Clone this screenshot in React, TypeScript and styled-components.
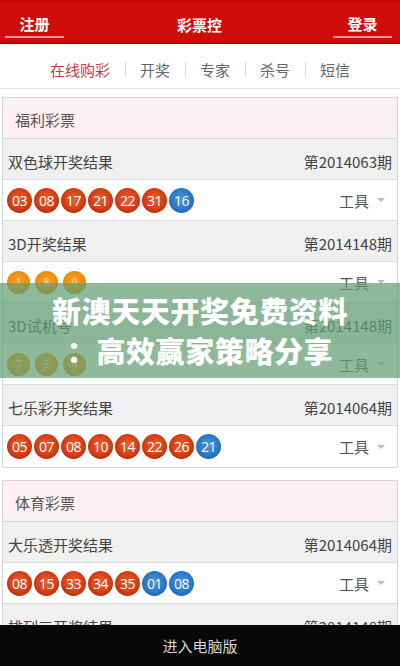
import React from "react";
import styled, { createGlobalStyle } from "styled-components";

const Global = createGlobalStyle`
  html, body { margin: 0; padding: 0; background: #ffffff; }
  body { font-family: "Noto Sans CJK SC", "Noto Sans", sans-serif; color: #333; }
  * { box-sizing: border-box; }
`;

const Page = styled.div`
  position: relative;
  width: 400px;
  min-height: 666px;
  background: #fff;
  padding-bottom: 60px;
`;

const TopBar = styled.header`
  height: 44px;
  display: flex;
  align-items: center;
  justify-content: space-between;
  padding: 0 8px 0 5px;
  background: linear-gradient(#c30606 0px, #d20c0c 3px, #cf0b0b 40px, #b80606 44px);
`;

const SideLink = styled.span`
  width: 59px;
  align-self: flex-end;
  margin-bottom: 6px;
  line-height: 22px;
  padding-bottom: 1px;
  text-align: center;
  color: #fff;
  font-size: 15px;
  font-weight: 700;
  border-bottom: 2px solid #f19a92;
`;

const Title = styled.span`
  color: #fff;
  font-size: 15px;
  font-weight: 700;
  margin-top: 4px;
  margin-left: 2px;
`;

const Nav = styled.nav`
  height: 45px;
  display: flex;
  align-items: center;
  justify-content: center;
  border-bottom: 1px solid #e6e6e6;
  padding-top: 6px;
`;

const NavItem = styled.span<{ $active?: boolean }>`
  font-size: 15px;
  color: ${(p) => (p.$active ? "#c23a46" : "#666")};
`;

const Sep = styled.span`
  width: 1px;
  height: 15px;
  background: #d6d6d6;
  margin: 0 14px 0 15px;
`;

const Content = styled.main`
  display: flex;
  flex-direction: column;
  gap: 12px;
  padding: 8px 2px 0;
`;

const Card = styled.section`
  border: 1px solid #d4d4d4;
  background: #fff;
`;

const CardHead = styled.div`
  height: 41px;
  display: flex;
  align-items: center;
  padding: 3px 12px 0;
  background: #fcf0f2;
  border-bottom: 1px solid #d9d2d3;
  font-size: 15px;
  color: #555;
`;

const TitleRow = styled.div`
  height: 41px;
  display: flex;
  align-items: center;
  justify-content: space-between;
  padding: 4px 5px 0 5px;
  background: #f0f0f0;
  border-bottom: 1px solid #dcdcdc;
  font-size: 15px;
  color: #444;
`;

const BallRow = styled.div`
  height: 41px;
  display: flex;
  align-items: center;
  padding: 0 12px 0 4px;
  background: #fff;
  border-bottom: 1px solid #dcdcdc;
  &:last-child { border-bottom: none; }
`;

const Balls = styled.div<{ $gap: number }>`
  display: flex;
  gap: ${(p) => p.$gap}px;
  flex: 1;
`;

const Ball = styled.span<{ $kind: "red" | "blue" | "orange" }>`
  width: ${(p) => (p.$kind === "orange" ? 23 : 25)}px;
  height: ${(p) => (p.$kind === "orange" ? 23 : 25)}px;
  border-radius: 50%;
  display: flex;
  align-items: center;
  justify-content: center;
  font-family: "Noto Sans", "DejaVu Sans", sans-serif;
  font-size: ${(p) => (p.$kind === "orange" ? 10 : 14)}px;
  letter-spacing: -0.4px;
  color: ${(p) => (p.$kind === "orange" ? "#fde7c4" : "#fff")};
  text-shadow: 0 0 1px rgba(0, 0, 0, 0.35);
  background: ${(p) =>
    p.$kind === "red"
      ? "radial-gradient(circle at 50% 45%, #f0602e 0%, #dc4216 48%, #b32d0c 78%, #d9652e 92%, #f2a56c 100%)"
      : p.$kind === "blue"
      ? "radial-gradient(circle at 50% 45%, #4d9be0 0%, #2a77c6 55%, #1c5fae 85%, #4f8fd0 100%)"
      : "radial-gradient(circle at 50% 45%, #f7a524 0%, #ee8c08 60%, #d97400 88%, #f3b560 100%)"};
`;

const Tool = styled.span`
  display: flex;
  align-items: center;
  font-size: 15px;
  color: #555;
  &::after {
    content: "";
    margin-left: 8px;
    border-left: 4px solid transparent;
    border-right: 4px solid transparent;
    border-top: 4px solid #bcbcbc;
  }
`;

const Footer = styled.footer`
  position: fixed;
  left: 0;
  right: 0;
  bottom: 0;
  height: 41px;
  display: flex;
  align-items: center;
  justify-content: center;
  background: #080808;
  color: #d6d6d6;
  font-size: 15px;
`;

const Promo = styled.div`
  position: absolute;
  left: 0;
  right: 0;
  top: 283px;
  height: 95px;
  display: flex;
  flex-direction: column;
  align-items: center;
  justify-content: center;
  padding-bottom: 2px;
  background: rgba(98, 160, 116, 0.72);
`;

const PromoLine = styled.div`
  line-height: 40px;
  font-size: 29px;
  font-weight: 900;
  color: #fff;
  letter-spacing: 0.6px;
  white-space: nowrap;
`;

type Draw = {
  name: string;
  issue: string;
  reds: string[];
  blues: string[];
  kind?: "orange";
};

const welfare: Draw[] = [
  { name: "双色球开奖结果", issue: "第2014063期", reds: ["03", "08", "17", "21", "22", "31"], blues: ["16"] },
  { name: "3D开奖结果", issue: "第2014148期", reds: ["1", "8", "0"], blues: [], kind: "orange" },
  { name: "3D试机号", issue: "第2014148期", reds: ["7", "5", "4"], blues: [], kind: "orange" },
  { name: "七乐彩开奖结果", issue: "第2014064期", reds: ["05", "07", "08", "10", "14", "22", "26"], blues: ["21"] },
];

const sports: Draw[] = [
  { name: "大乐透开奖结果", issue: "第2014064期", reds: ["08", "15", "33", "34", "35"], blues: ["01", "08"] },
  { name: "排列三开奖结果", issue: "第2014148期", reds: ["3", "6", "2"], blues: [], kind: "orange" },
];

function DrawBlock({ d }: { d: Draw }) {
  const orange = d.kind === "orange";
  return (
    <>
      <TitleRow>
        <span>{d.name}</span>
        <span>{d.issue}</span>
      </TitleRow>
      <BallRow>
        <Balls $gap={orange ? 5 : 2}>
          {d.reds.map((n, i) => (
            <Ball key={"r" + i} $kind={orange ? "orange" : "red"}>{n}</Ball>
          ))}
          {d.blues.map((n, i) => (
            <Ball key={"b" + i} $kind="blue">{n}</Ball>
          ))}
        </Balls>
        <Tool>工具</Tool>
      </BallRow>
    </>
  );
}

export default function App() {
  return (
    <Page>
      <Global />
      <TopBar>
        <SideLink>注册</SideLink>
        <Title>彩票控</Title>
        <SideLink>登录</SideLink>
      </TopBar>
      <Nav>
        <NavItem $active>在线购彩</NavItem>
        <Sep />
        <NavItem>开奖</NavItem>
        <Sep />
        <NavItem>专家</NavItem>
        <Sep />
        <NavItem>杀号</NavItem>
        <Sep />
        <NavItem>短信</NavItem>
      </Nav>
      <Content>
        <Card>
          <CardHead>福利彩票</CardHead>
          {welfare.map((d) => (
            <DrawBlock key={d.name} d={d} />
          ))}
        </Card>
        <Card>
          <CardHead>体育彩票</CardHead>
          {sports.map((d) => (
            <DrawBlock key={d.name} d={d} />
          ))}
        </Card>
      </Content>
      <Promo>
        <PromoLine>新澳天天开奖免费资料</PromoLine>
        <PromoLine>：高效赢家策略分享</PromoLine>
      </Promo>
      <Footer>进入电脑版</Footer>
    </Page>
  );
}
